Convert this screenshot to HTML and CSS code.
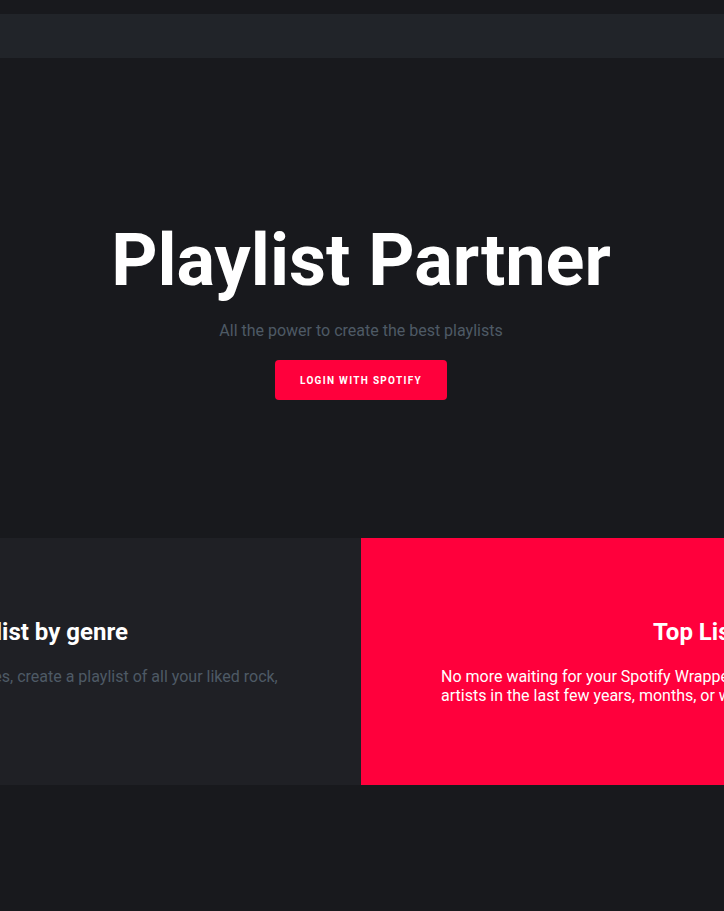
FILE: index.html
```html
<!DOCTYPE html>
<html lang="en">
<head>
<meta charset="utf-8">
<title>Playlist Partner</title>
<link rel="stylesheet" href="styles.css">
</head>
<body>
  <div class="topbar"></div>
  <header class="hero">
    <h1 class="hero-title">Playlist Partner</h1>
    <p class="hero-sub">All the power to create the best playlists</p>
    <a class="btn-login" href="#">LOGIN WITH SPOTIFY</a>
  </header>
  <section class="features">
    <div class="feature feature-dark">
      <h2 class="feature-title">My playlist by genre</h2>
      <p class="feature-text">Sort all your saved songs by genres, create a playlist of all your liked rock, pop, or jazz songs.</p>
    </div>
    <div class="feature feature-red">
      <h2 class="feature-title">Top Lists</h2>
      <p class="feature-text">No more waiting for your Spotify Wrapped, see all of your top songs and artists in the last few years, months, or weeks.</p>
    </div>
  </section>
</body>
</html>
```

FILE: styles.css
```css
html, body {
  margin: 0;
  padding: 0;
}
body {
  background: #18191d;
  font-family: Roboto, "Liberation Sans", sans-serif;
  color: #ffffff;
  overflow: hidden;
  min-height: 911px;
}
.topbar {
  margin-top: 14px;
  height: 44px;
  background: #212429;
}
.hero {
  height: 480px;
  box-sizing: border-box;
  padding-top: 160px;
  padding-right: 2px;
  display: flex;
  flex-direction: column;
  align-items: center;
  text-align: center;
}
.hero-title {
  margin: 0;
  font-size: 72px;
  font-weight: 700;
  line-height: 1.2;
}
.hero-sub {
  margin: 17px 0 0;
  font-size: 16px;
  color: #4e5a65;
}
.btn-login {
  margin-top: 20px;
  width: 172px;
  height: 40px;
  box-sizing: border-box;
  display: flex;
  align-items: center;
  justify-content: center;
  background: #ff003c;
  color: #ffffff;
  border-radius: 4px;
  font-size: 10px;
  font-weight: 700;
  letter-spacing: 1.3px;
  text-decoration: none;
}
.features {
  display: flex;
  justify-content: center;
  overflow: hidden;
  padding-right: 2px;
}
.feature {
  flex: 0 0 682px;
  box-sizing: border-box;
  padding: 80px;
  text-align: center;
}
.feature-dark {
  background: #1f2025;
}
.feature-red {
  background: #ff003c;
}
.feature-title {
  margin: 0;
  font-size: 24px;
  font-weight: 700;
  line-height: 1.2;
}
.feature-text {
  margin: 20px 0 0;
  font-size: 16px;
  line-height: 1.2;
  text-align: left;
}
.feature-dark .feature-text {
  color: #4e5a65;
}
```
